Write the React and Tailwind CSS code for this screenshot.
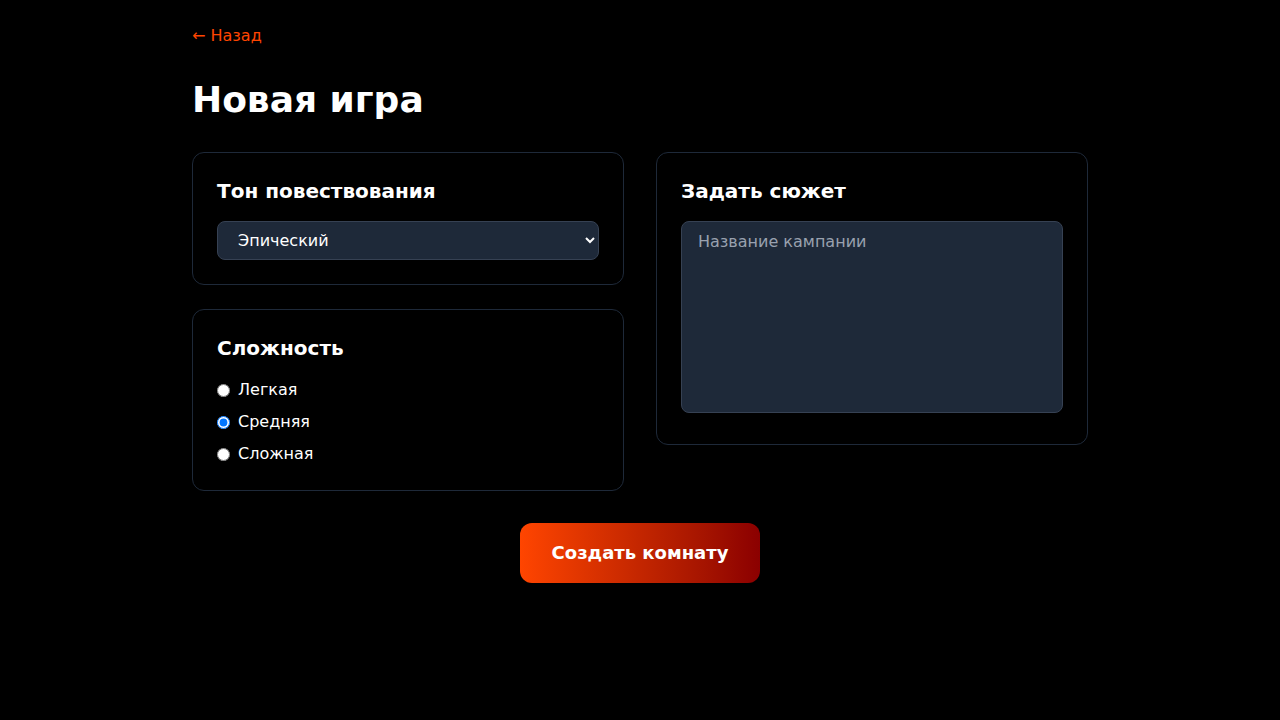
import React from "react";

export default function App() {
  return (
    <div className="min-h-screen bg-black text-white" style={{ fontFamily: '"DejaVu Sans", sans-serif' }}>
      <div className="mx-auto max-w-4xl py-6">
        <a href="#" className="mb-8 block text-base text-[#ff4500]">← Назад</a>
        <h1 className="mb-8 text-4xl font-bold">Новая игра</h1>
        <div className="grid grid-cols-2 gap-8">
          <div className="flex flex-col gap-6">
            <div className="rounded-xl border border-gray-800 p-6">
              <h2 className="mb-4 text-xl font-bold">Тон повествования</h2>
              <select className="w-full rounded-lg border border-gray-700 bg-gray-800 px-4 py-2 text-base text-white" defaultValue="epic">
                <option value="epic">Эпический</option>
                <option value="dark">Мрачный</option>
                <option value="funny">Юмористический</option>
              </select>
            </div>
            <div className="rounded-xl border border-gray-800 p-6">
              <h2 className="mb-4 text-xl font-bold">Сложность</h2>
              <div className="space-y-2">
                <label className="flex items-center gap-2">
                  <input type="radio" name="diff" />
                  <span>Легкая</span>
                </label>
                <label className="flex items-center gap-2">
                  <input type="radio" name="diff" defaultChecked />
                  <span>Средняя</span>
                </label>
                <label className="flex items-center gap-2">
                  <input type="radio" name="diff" />
                  <span>Сложная</span>
                </label>
              </div>
            </div>
          </div>
          <div className="self-start rounded-xl border border-gray-800 p-6">
            <h2 className="mb-4 text-xl font-bold">Задать сюжет</h2>
            <textarea
              className="h-48 w-full resize-none rounded-lg border border-gray-700 bg-gray-800 px-4 py-2 text-base text-white placeholder-gray-400"
              placeholder="Название кампании"
            />
          </div>
        </div>
        <div className="mt-8 flex justify-center">
          <button className="rounded-xl bg-gradient-to-r from-[#ff4500] to-[#8b0000] px-8 py-4 text-lg font-bold text-white">
            Создать комнату
          </button>
        </div>
      </div>
    </div>
  );
}
